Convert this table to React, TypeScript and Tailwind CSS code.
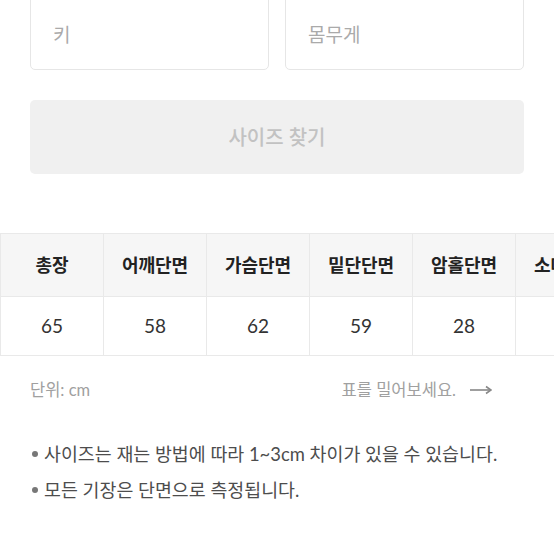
import React from 'react';

const headers = ['총장', '어깨단면', '가슴단면', '밑단단면', '암홀단면', '소매길이'];
const values = ['65', '58', '62', '59', '28', '60'];

const notes = [
  '사이즈는 재는 방법에 따라 1~3cm 차이가 있을 수 있습니다.',
  '모든 기장은 단면으로 측정됩니다.',
];

export default function App() {
  return (
    <div className="w-[554px] h-[554px] overflow-hidden bg-white font-['Lato','Noto_Sans_CJK_KR',sans-serif]">
      {/* Body size inputs */}
      <div className="px-[30px] -mt-[12px]">
        <div className="grid grid-cols-2 gap-[16px]">
          <div className="h-[82px] rounded-[5px] border border-[#e6e6e6] bg-white pl-[22px] pt-[32px] text-[19px] text-[#aaaaaa] leading-[28px]">
            키
          </div>
          <div className="h-[82px] rounded-[5px] border border-[#e6e6e6] bg-white pl-[22px] pt-[32px] text-[19px] text-[#aaaaaa] leading-[28px]">
            몸무게
          </div>
        </div>
        <button className="mt-[30px] flex h-[74px] w-full items-center justify-center rounded-[5px] bg-[#f0f0f0] text-[20px] font-medium text-[#c2c2c2]">
          사이즈 찾기
        </button>
      </div>

      {/* Size table */}
      <div className="mt-[59px] overflow-hidden">
        <table className="w-[618px] table-fixed border-collapse">
          <thead>
            <tr className="h-[63px] bg-[#f6f6f6]">
              {headers.map((h) => (
                <th key={h} className="w-[103px] border border-[#e9e9e9] text-[18px] font-bold text-[#222222] whitespace-nowrap">
                  {h}
                </th>
              ))}
            </tr>
          </thead>
          <tbody>
            <tr className="h-[59px]">
              {values.map((v, i) => (
                <td key={i} className="border border-[#e9e9e9] text-center text-[19px] text-[#333333]">
                  {v}
                </td>
              ))}
            </tr>
          </tbody>
        </table>
      </div>

      <div className="pl-[30px] pr-[62px]">
        <div className="mt-[22px] flex items-center justify-between text-[16.5px] text-[#a0a0a0]">
          <span>단위: cm</span>
          <span className="flex items-center gap-[14px]">
            표를 밀어보세요.
            <svg width="22" height="10" viewBox="0 0 22 10" fill="none">
              <line x1="0" y1="5" x2="20" y2="5" stroke="#888888" strokeWidth="1.6" />
              <path d="M16 1.5 L21 5 L16 8.5" stroke="#888888" strokeWidth="1.6" fill="none" />
            </svg>
          </span>
        </div>
      </div>

      <ul className="mt-[38px] space-y-[10px] pl-[32px] text-[18.4px] text-[#4d4d4d]">
        {notes.map((n) => (
          <li key={n} className="flex items-center gap-[6px] leading-[26px] whitespace-nowrap">
            <span className="h-[6px] w-[6px] rounded-full bg-[#777777]" />
            {n}
          </li>
        ))}
      </ul>
    </div>
  );
}
